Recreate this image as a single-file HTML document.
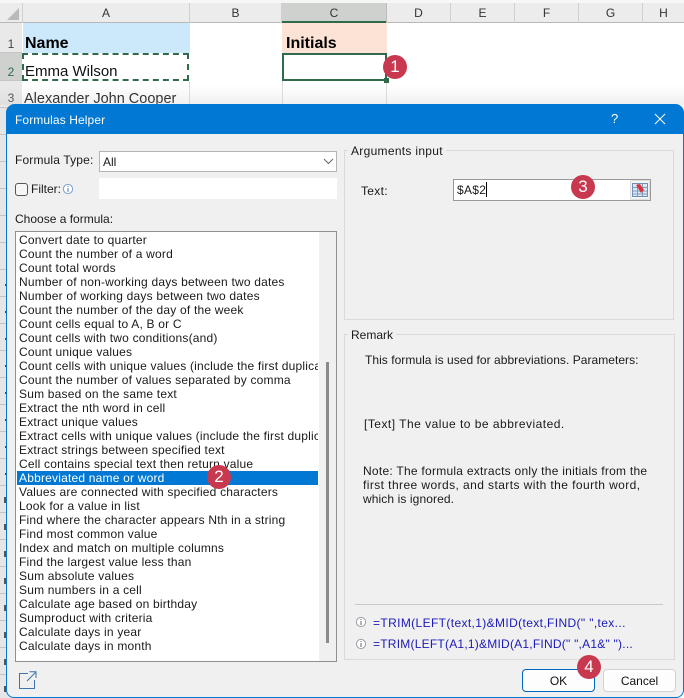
<!DOCTYPE html>
<html><head><meta charset="utf-8"><style>
html,body{margin:0;padding:0}
body{width:684px;height:698px;overflow:hidden;position:relative;background:#fff;font-family:"Liberation Sans",sans-serif;font-size:12px;color:#1a1a1a}
div,span{position:absolute;box-sizing:border-box}
.t{white-space:nowrap;line-height:14px}
.h{top:3px;height:20px;line-height:21px;text-align:center;color:#333;font-size:12px;border-right:1px solid #d0d0d0}
.v{top:23px;width:1px;height:81px;background:#dcdcdc}
.r{left:0;width:22px;background:#e9e9e9;color:#444;font-size:12px;text-align:center;border-bottom:1px solid #c4c4c4}
.c{width:24px;height:24px;border-radius:50%;background:#c8384f;color:#fff;text-align:center;line-height:24px;font-size:17px}
.l{left:19px;white-space:nowrap;line-height:14px;width:299px;overflow:hidden;letter-spacing:.2px}
.b{border:1px solid #dadada}
.g{left:0;width:7px;height:1px;background:#c4c4c4}
.k{left:5px;width:2px;height:2px;background:#444}
.k2{left:4px;width:3px;height:6px;background:#555}
</style></head><body>
<div style="left:0;top:0;width:684px;height:3px;background:#f6f6f6"></div>
<div style="left:0;top:3px;width:684px;height:20px;background:#ececec;border-bottom:1px solid #b8b8b8"></div>
<div style="left:282px;top:3px;width:105px;height:20px;background:#cfd1cf"></div>
<div style="left:282px;top:21px;width:105px;height:2px;background:#2f6b4a"></div>
<svg style="position:absolute;left:6px;top:7px" width="14" height="14"><path d="M13 1V13H1Z" fill="#b9b9b9"/></svg>
<div class="h" style="left:0;width:23px"></div>
<div class="h" style="left:23px;width:167px">A</div>
<div class="h" style="left:190px;width:92px">B</div>
<div class="h" style="left:282px;width:105px;border-color:#bbb">C</div>
<div class="h" style="left:387px;width:64px">D</div>
<div class="h" style="left:451px;width:64px">E</div>
<div class="h" style="left:515px;width:64px">F</div>
<div class="h" style="left:579px;width:64px">G</div>
<div class="h" style="left:643px;width:41px;border:0">H</div>
<div class="r" style="top:23px;height:30px;line-height:42px">1</div>
<div class="r" style="top:53px;height:28px;line-height:38px;background:#cfd1cf;color:#2f6b4a">2</div>
<div class="r" style="top:81px;height:27px;line-height:35px">3</div>
<div class="r" style="top:108px;height:590px;background:#e6e6e6;border:0"></div>
<div class="g" style="top:134px"></div>
<div class="g" style="top:161px"></div>
<div class="g" style="top:188px"></div>
<div class="g" style="top:215px"></div>
<div class="g" style="top:242px"></div>
<div class="g" style="top:269px"></div>
<div class="g" style="top:296px"></div>
<div class="g" style="top:323px"></div>
<div class="g" style="top:350px"></div>
<div class="g" style="top:377px"></div>
<div class="g" style="top:404px"></div>
<div class="g" style="top:431px"></div>
<div class="g" style="top:458px"></div>
<div class="g" style="top:485px"></div>
<div class="g" style="top:512px"></div>
<div class="g" style="top:539px"></div>
<div class="g" style="top:566px"></div>
<div class="g" style="top:593px"></div>
<div class="g" style="top:620px"></div>
<div class="g" style="top:647px"></div>
<div class="g" style="top:674px"></div>
<div class="k" style="top:284px"></div>
<div class="k" style="top:311px"></div>
<div class="k" style="top:338px"></div>
<div class="k" style="top:365px"></div>
<div class="k" style="top:392px"></div>
<div class="k" style="top:419px"></div>
<div class="k" style="top:446px"></div>
<div class="k" style="top:473px"></div>
<div class="k2" style="top:497px"></div>
<div class="k2" style="top:524px"></div>
<div class="k2" style="top:551px"></div>
<div class="k2" style="top:578px"></div>
<div class="k2" style="top:605px"></div>
<div class="k2" style="top:632px"></div>
<div class="k2" style="top:659px"></div>
<div class="k2" style="top:686px"></div>
<div style="left:23px;top:23px;width:167px;height:30px;background:#cce8fb"></div>
<div style="left:282px;top:23px;width:105px;height:30px;background:#fde3d6"></div>
<div class="v" style="left:282px;top:81px;height:23px"></div>
<div class="v" style="left:386px;top:81px;height:23px"></div>
<div class="v" style="left:189px;top:81px;height:23px"></div>
<div class="t" style="left:25px;top:35px;font-size:16px;font-weight:bold;line-height:18px;color:#000">Name</div>
<div class="t" style="left:286px;top:35px;font-size:16px;font-weight:bold;line-height:18px;color:#000">Initials</div>
<div class="t" style="left:25px;top:63px;font-size:15px;line-height:18px;color:#111">Emma Wilson</div>
<div class="t" style="left:24px;top:90px;font-size:14.5px;line-height:18px;color:#111">Alexander John Cooper</div>
<div style="left:22px;top:53px;width:167px;height:28px;border:2px dashed #2f6b4a"></div>
<div style="left:282px;top:53px;width:105px;height:28px;border:2px solid #2f6b4a"></div>
<div style="left:384px;top:78px;width:5px;height:5px;background:#2f6b4a"></div>
<div class="c" style="left:383px;top:55px">1</div>
<div style="left:0;top:85px;width:684px;height:20px;background:linear-gradient(rgba(200,200,200,0),rgba(200,200,200,.28))"></div>

<div style="left:6px;top:104px;width:678px;height:594px;background:#f0f0f0;border:1px solid #0078d4;border-top:0;border-radius:9px 9px 8px 8px;overflow:hidden"></div>
<div style="left:6px;top:104px;width:678px;height:30px;background:#0078d4;border-radius:9px 9px 0 0"></div>
<div class="t" style="left:15px;top:113px;color:#fff;font-size:12px;letter-spacing:.1px">Formulas Helper</div>
<div class="t" style="left:611px;top:112px;color:#fff;font-size:13px">?</div>
<svg style="position:absolute;left:654px;top:113px" width="12" height="12"><path d="M1 1L11 11M11 1L1 11" stroke="#fff" fill="none"/></svg>

<div class="t" style="left:15px;top:153px;letter-spacing:.15px">Formula Type:</div>
<div style="left:99px;top:151px;width:238px;height:21px;background:#fff;border:1px solid #b5b5b5"></div>
<div class="t" style="left:103px;top:155px">All</div>
<svg style="position:absolute;left:323px;top:158px" width="11" height="7"><path d="M1 1L5.500 5.500L10 1" stroke="#666" fill="none"/></svg>
<div style="left:15px;top:183px;width:13px;height:13px;border:1px solid #555;border-radius:3px;background:#f6f6f6"></div>
<div class="t" style="left:31px;top:182px">Filter:</div>
<svg style="position:absolute;left:62px;top:183px" width="12" height="12"><circle cx="6" cy="6" r="4.600" fill="#fff" stroke="#7ba0cf"/><path d="M6 5V9M6 3V4" stroke="#4a7dbd"/></svg>
<div style="left:99px;top:178px;width:238px;height:21px;background:#fff"></div>
<div class="t" style="left:15px;top:212px">Choose a formula:</div>

<div style="left:15px;top:231px;width:322px;height:431px;background:#fff;border:1px solid #8f8f8f"></div>
<div style="left:319px;top:232px;width:17px;height:429px;background:#f0f0f0"></div>
<div style="left:326px;top:362px;width:3px;height:281px;background:#8a8a8a"></div>
<div style="left:17px;top:471px;width:301px;height:14px;background:#0078d4"></div>
<div class="l" style="top:233px">Convert date to quarter</div>
<div class="l" style="top:247px">Count the number of a word</div>
<div class="l" style="top:261px">Count total words</div>
<div class="l" style="top:275px">Number of non-working days between two dates</div>
<div class="l" style="top:289px">Number of working days between two dates</div>
<div class="l" style="top:303px">Count the number of the day of the week</div>
<div class="l" style="top:317px">Count cells equal to A, B or C</div>
<div class="l" style="top:331px">Count cells with two conditions(and)</div>
<div class="l" style="top:345px">Count unique values</div>
<div class="l" style="top:359px">Count cells with unique values (include the first duplicate)</div>
<div class="l" style="top:373px">Count the number of values separated by comma</div>
<div class="l" style="top:387px">Sum based on the same text</div>
<div class="l" style="top:401px">Extract the nth word in cell</div>
<div class="l" style="top:415px">Extract unique values</div>
<div class="l" style="top:429px">Extract cells with unique values (include the first duplicate)</div>
<div class="l" style="top:443px">Extract strings between specified text</div>
<div class="l" style="top:457px">Cell contains special text then return value</div>
<div class="l" style="top:471px;color:#fff">Abbreviated name or word</div>
<div class="l" style="top:485px">Values are connected with specified characters</div>
<div class="l" style="top:499px">Look for a value in list</div>
<div class="l" style="top:513px">Find where the character appears Nth in a string</div>
<div class="l" style="top:527px">Find most common value</div>
<div class="l" style="top:541px">Index and match on multiple columns</div>
<div class="l" style="top:555px">Find the largest value less than</div>
<div class="l" style="top:569px">Sum absolute values</div>
<div class="l" style="top:583px">Sum numbers in a cell</div>
<div class="l" style="top:597px">Calculate age based on birthday</div>
<div class="l" style="top:611px">Sumproduct with criteria</div>
<div class="l" style="top:625px">Calculate days in year</div>
<div class="l" style="top:639px">Calculate days in month</div>
<div class="c" style="left:207px;top:465px">2</div>

<svg style="position:absolute;left:19px;top:671px" width="18" height="18"><path d="M9 2.500H.5V17.500H15.500V9M8 10L16.500 1.500M10.500 .8H17V7" stroke="#3f73ad" fill="none"/></svg>

<div class="b" style="left:344px;top:150px;width:330px;height:170px"></div>
<div class="t" style="left:348px;top:144px;background:#f0f0f0;padding:0 3px;letter-spacing:.3px">Arguments input</div>
<div class="t" style="left:361px;top:184px;letter-spacing:.3px">Text:</div>
<div style="left:453px;top:179px;width:198px;height:22px;background:#fff;border:1px solid #999"></div>
<div class="t" style="left:457px;top:183px;letter-spacing:.3px">$A$2</div>
<div style="left:486px;top:182px;width:1px;height:15px;background:#000"></div>
<div style="left:630px;top:180px;width:20px;height:20px;background:#f4f4f4;border:1px solid #ddd;border-radius:2px"></div>
<svg style="position:absolute;left:632px;top:183px" width="16" height="14"><rect x=".5" y=".5" width="15" height="13" fill="#dce8f5" stroke="#6f8fb5"/><path d="M1 4.500H15M1 8H15M1 11H15M5.500 1V13M10.500 1V13" stroke="#7f9cc0"/><path d="M4 2L8 1L12 7L9 10Z" fill="#d8323a"/></svg>
<div class="c" style="left:571px;top:175px">3</div>

<div class="b" style="left:344px;top:334px;width:331px;height:326px"></div>
<div class="t" style="left:348px;top:328px;background:#f0f0f0;padding:0 3px">Remark</div>
<div class="t" style="left:365px;top:353px;letter-spacing:.04px">This formula is used for abbreviations. Parameters:</div>
<div class="t" style="left:364px;top:417px;letter-spacing:.48px">[Text] The value to be abbreviated.</div>
<div class="t" style="left:363px;top:464px;letter-spacing:.26px">Note: The formula extracts only the initials from the</div>
<div class="t" style="left:363px;top:478px;letter-spacing:.42px">first three words, and starts with the fourth word,</div>
<div class="t" style="left:363px;top:492px;letter-spacing:.1px">which is ignored.</div>
<div style="left:355px;top:604px;width:308px;height:1px;background:#c8c8c8"></div>
<svg style="position:absolute;left:355px;top:616px" width="12" height="12"><circle cx="6" cy="6" r="4.600" fill="#fff" stroke="#9a9fa8"/><path d="M6 5V9M6 3V4" stroke="#666"/></svg>
<svg style="position:absolute;left:355px;top:638px" width="12" height="12"><circle cx="6" cy="6" r="4.600" fill="#fff" stroke="#9a9fa8"/><path d="M6 5V9M6 3V4" stroke="#666"/></svg>
<div class="t" style="left:373px;top:616px;color:#1a1ab8;letter-spacing:.37px">=TRIM(LEFT(text,1)&amp;MID(text,FIND(" ",tex...</div>
<div class="t" style="left:373px;top:637px;color:#1a1ab8;letter-spacing:.23px">=TRIM(LEFT(A1,1)&amp;MID(A1,FIND(" ",A1&amp;" ")...</div>

<div style="left:522px;top:669px;width:73px;height:23px;background:#fdfdfd;border:1px solid #0067c0;border-radius:4px;text-align:center;line-height:22px;color:#111">OK</div>
<div style="left:603px;top:669px;width:73px;height:23px;background:#fdfdfd;border:1px solid #d2d2d2;border-radius:4px;text-align:center;line-height:22px;color:#111">Cancel</div>
<div class="c" style="left:577px;top:655px">4</div>
</body></html>
